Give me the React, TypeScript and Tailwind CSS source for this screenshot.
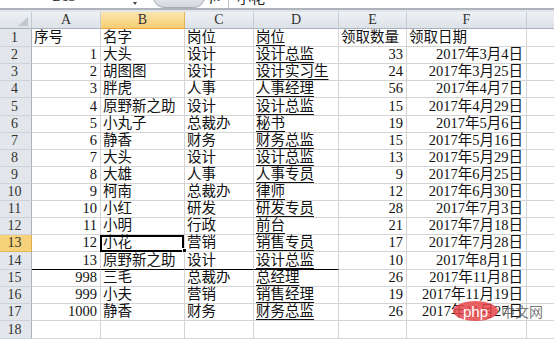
import React from "react";

type Row = (string | number)[];

const rows: Row[] = [
  ["序号", "名字", "岗位", "岗位", "领取数量", "领取日期"],
  [1, "大头", "设计", "设计总监", 33, "2017年3月4日"],
  [2, "胡图图", "设计", "设计实习生", 24, "2017年3月25日"],
  [3, "胖虎", "人事", "人事经理", 56, "2017年4月7日"],
  [4, "原野新之助", "设计", "设计总监", 15, "2017年4月29日"],
  [5, "小丸子", "总裁办", "秘书", 19, "2017年5月6日"],
  [6, "静香", "财务", "财务总监", 15, "2017年5月16日"],
  [7, "大头", "设计", "设计总监", 13, "2017年5月29日"],
  [8, "大雄", "人事", "人事专员", 9, "2017年6月25日"],
  [9, "柯南", "总裁办", "律师", 12, "2017年6月30日"],
  [10, "小红", "研发", "研发专员", 28, "2017年7月3日"],
  [11, "小明", "行政", "前台", 21, "2017年7月18日"],
  [12, "小花", "营销", "销售专员", 17, "2017年7月28日"],
  [13, "原野新之助", "设计", "设计总监", 10, "2017年8月1日"],
  [998, "三毛", "总裁办", "总经理", 26, "2017年11月8日"],
  [999, "小夫", "营销", "销售经理", 19, "2017年11月19日"],
  [1000, "静香", "财务", "财务总监", 26, "2017年11月27日"],
  ["", "", "", "", "", ""],
];

const heights = [
  "h-[18px]", "h-[17px]", "h-[17px]", "h-[17px]", "h-[18px]", "h-[17px]",
  "h-[17px]", "h-[17px]", "h-[17px]", "h-[17px]", "h-[17px]", "h-[17px]",
  "h-[17px]", "h-[18px]", "h-[17px]", "h-[17px]", "h-[17px]", "h-[18px]",
];

const colW = ["w-[69px]", "w-[84px]", "w-[69px]", "w-[85px]", "w-[68px]", "w-[120px]"];
const letters = ["A", "B", "C", "D", "E", "F"];

function DataCell({
  value,
  col,
  rowIdx,
}: {
  value: string | number;
  col: number;
  rowIdx: number;
}) {
  const isHeaderRow = rowIdx === 0;
  const right = !isHeaderRow && (col === 0 || col === 4 || col === 5);
  const underline = col === 3 && value !== "";
  const blackBottom = rowIdx === 13 && col <= 3;
  const selected = rowIdx === 12 && col === 1;
  return (
    <div
      className={`relative flex shrink-0 items-end whitespace-nowrap border-r border-b border-r-[#d4d4d4] pb-[2px] text-[14.5px] leading-none ${colW[col]} ${
        right ? "justify-end pr-[3px]" : "pl-[2px]"
      } ${blackBottom ? "border-b-black" : "border-b-[#d4d4d4]"} ${selected ? "z-10" : ""}`}
    >
      <span className={underline ? "underline decoration-1 underline-offset-[3px]" : ""}>{value}</span>
      {selected && (
        <>
          <div className="pointer-events-none absolute left-[-1px] top-0 right-0 bottom-[-1px] border-2 border-black" />
          <div className="absolute right-[-3px] bottom-[-2px] h-[5px] w-[5px] border border-white bg-black" />
        </>
      )}
    </div>
  );
}

export default function App() {
  return (
    <div className="relative h-[339px] w-[554px] overflow-hidden bg-white text-[#111] font-['Liberation_Serif','Noto_Sans_CJK_SC',serif]">
      {/* formula bar (cut off) */}
      <div className="flex h-[8px] overflow-hidden bg-white text-[14px] leading-[14px] text-[#222]">
        <div className="flex w-[128px] shrink-0 justify-center">
          <span className="mt-[-10px]">B13</span>
        </div>
        <div className="ml-[5px] mt-[2px] h-0 w-0 shrink-0 border-x-[2px] border-t-[3px] border-x-transparent border-t-[#444]" />
        <div className="ml-[16px] mt-[-14px] h-[22px] w-[52px] shrink-0 rounded-full border border-[#a6adb6] bg-linear-to-b from-[#f7f8fa] to-[#d3d8de]" />
        <span className="ml-[5px] mt-[-10px] italic">fx</span>
        <div className="ml-[8px] h-full w-px shrink-0 bg-[#b9c0c8]" />
        <span className="ml-[8px] mt-[-10px] font-['Noto_Sans_CJK_SC',sans-serif]">小花</span>
      </div>
      <div className="h-[2px] bg-[#aeb4bb]" />
      <div className="h-[2px] bg-[#e2e6eb]" />

      {/* column headers */}
      <div className="flex h-[17px] text-[14px] leading-none text-[#333]">
        <div className="relative w-[32px] shrink-0 border-r border-b border-r-[#c3c9d0] border-b-[#a9b2bd] bg-linear-to-b from-[#eef1f4] to-[#dde2e8]">
          <svg className="absolute right-[3px] bottom-[2px]" width="10" height="9" viewBox="0 0 10 9">
            <polygon points="10,0 10,9 0,9" fill="#c2c8cf" />
          </svg>
        </div>
        {letters.map((l, i) => (
          <div
            key={l}
            className={`flex shrink-0 items-center justify-center border-r border-b ${colW[i]} ${
              i === 1
                ? "border-r-[#e2b455] border-b-[#eda83a] bg-linear-to-b from-[#fbe6ad] to-[#f6cd72]"
                : "border-r-[#c6ccd3] border-b-[#a9b2bd] bg-linear-to-b from-[#eef1f4] to-[#dde2e8]"
            }`}
          >
            {l}
          </div>
        ))}
        <div className="flex-1 border-b border-b-[#a9b2bd] bg-linear-to-b from-[#eef1f4] to-[#dde2e8]" />
      </div>

      {/* rows */}
      {rows.map((r, i) => (
        <div key={i} className={`flex ${heights[i]}`}>
          <div
            className={`flex w-[32px] shrink-0 items-center justify-center border-r border-b pr-[2px] text-[14px] leading-none text-[#333] ${
              i === 12
                ? "border-r-[#e0ad4a] border-b-[#e5b65a] bg-[#f6d27a]"
                : "border-r-[#a9b2bd] border-b-[#cdd3da] bg-[#e3e7ec]"
            }`}
          >
            {i + 1}
          </div>
          {r.map((v, c) => (
            <DataCell key={c} value={v} col={c} rowIdx={i} />
          ))}
          <div className="flex-1 border-b border-b-[#d4d4d4]" />
        </div>
      ))}

      {/* watermark overlay */}
      <div className="pointer-events-none absolute left-[453px] top-[301px] flex items-center">
        <div className="flex h-[20px] w-[45px] items-center justify-center rounded-[50%] bg-[#e8474a]/85 font-['Liberation_Sans',sans-serif] text-[15px] leading-none text-white">
          php
        </div>
        <span className="ml-[3px] font-['Noto_Sans_CJK_SC',sans-serif] text-[14px] leading-none text-[#555]/80">中文网</span>
      </div>
    </div>
  );
}
